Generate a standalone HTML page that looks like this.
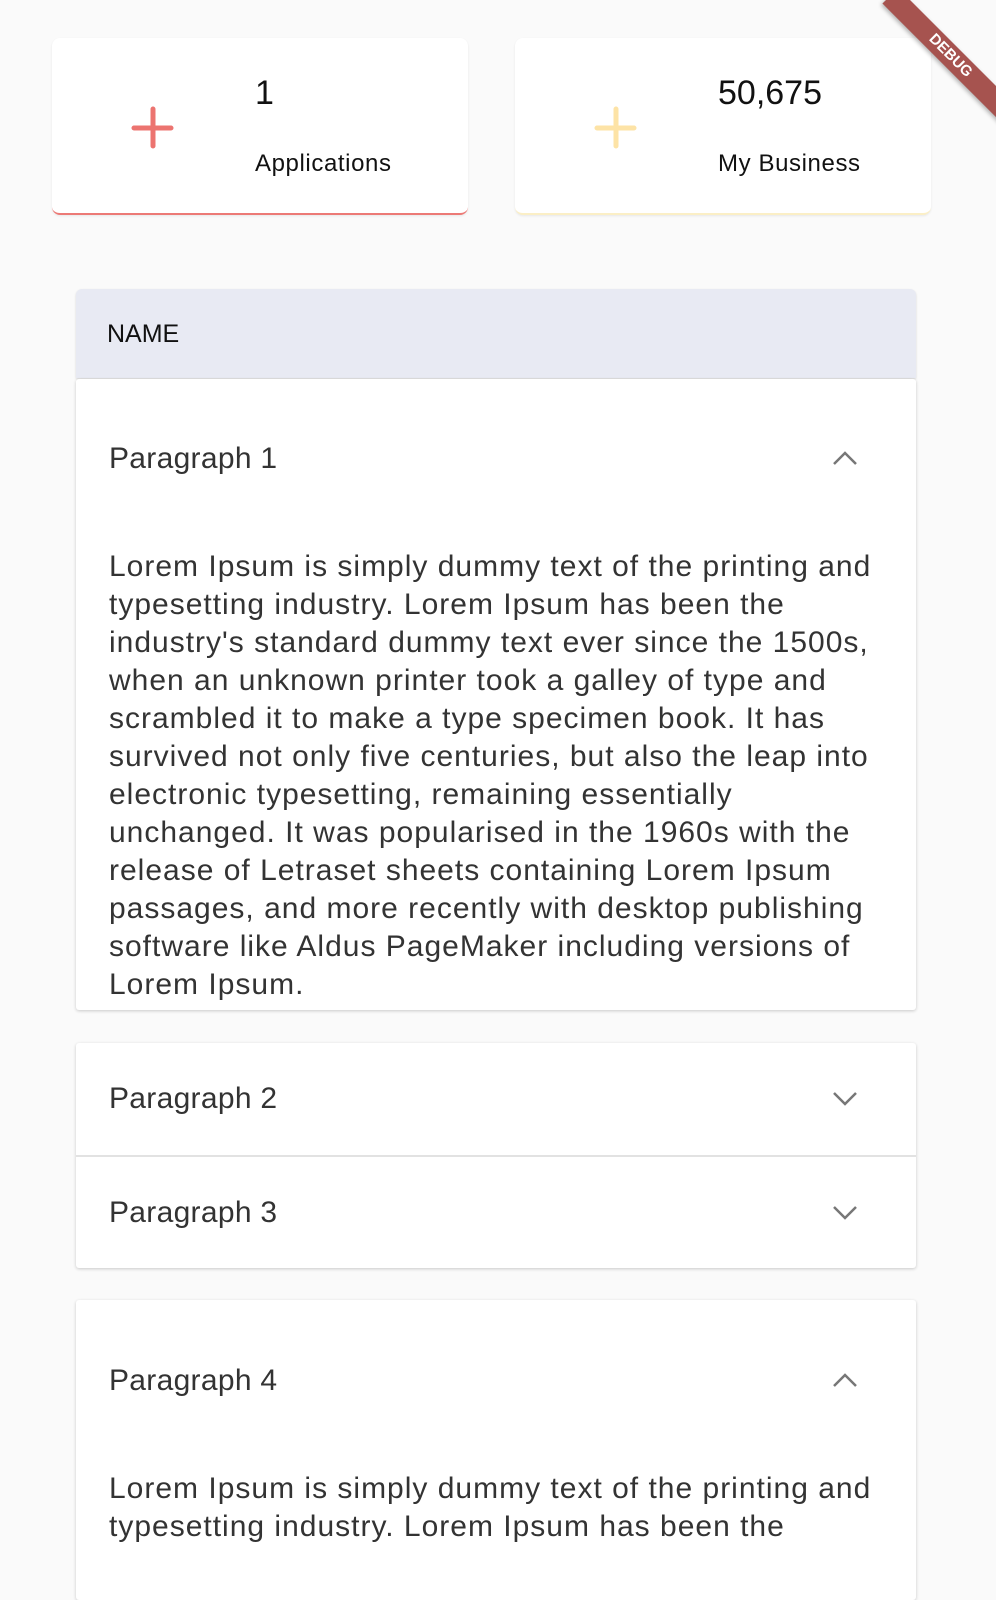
<!DOCTYPE html><html><head><style>
body{margin:0;width:996px;height:1552px;background:#fafafa;position:relative;overflow:hidden;font-family:"Liberation Sans",sans-serif;color:#222}
.card{position:absolute;top:38px;width:416px;height:175px;background:#fff;border-radius:8px;box-shadow:0 1px 2px rgba(0,0,0,.08)}
.num{position:absolute;left:203px;top:36px;font-size:34px;color:#111}
.lab{position:absolute;left:203px;top:112px;font-size:24px;color:#111;letter-spacing:.6px}
.plus{position:absolute;left:78px;top:67px}
.hdr{position:absolute;left:76px;top:289px;width:840px;height:89px;background:#e8eaf3;border-radius:6px 6px 0 0;box-shadow:0 1px 2px rgba(0,0,0,.15)}
.hdr span{position:absolute;left:31px;top:31px;font-size:25px;color:#111}
.p{position:absolute;left:76px;width:840px;background:#fff;box-shadow:0 1px 3px rgba(0,0,0,.2);border-radius:3px}
.t{position:absolute;left:33px;font-size:30px;color:#333;letter-spacing:.3px}
.ch{position:absolute;left:756px}
.body{position:absolute;left:33px;font-size:30px;letter-spacing:1px;line-height:38px;color:#333;white-space:nowrap}
</style></head><body>
<div class="card" style="left:52px;border-bottom:2px solid #ec7a76">
<svg class="plus" width="46" height="46"><path d="M23 4V41M4 23H41" stroke="#ec7470" stroke-width="5" stroke-linecap="round"/></svg>
<div class="num">1</div><div class="lab">Applications</div></div>
<div class="card" style="left:515px;border-bottom:2px solid #fbefc6">
<svg class="plus" width="46" height="46"><path d="M23 4V41M4 23H41" stroke="#fde3a6" stroke-width="5" stroke-linecap="round"/></svg>
<div class="num">50,675</div><div class="lab">My Business</div></div>
<div class="hdr"><span>NAME</span></div>
<div class="p" style="top:379px;height:631px">
<div class="t" style="top:63px">Paragraph 1</div>
<svg class="ch" style="top:70px" width="26" height="18"><path d="M2 15L13 4L24 15" stroke="#777" stroke-width="2.5" fill="none"/></svg>
<div class="body" style="top:169px">Lorem Ipsum is simply dummy text of the printing and<br>typesetting industry. Lorem Ipsum has been the<br>industry's standard dummy text ever since the 1500s,<br>when an unknown printer took a galley of type and<br>scrambled it to make a type specimen book. It has<br>survived not only five centuries, but also the leap into<br>electronic typesetting, remaining essentially<br>unchanged. It was popularised in the 1960s with the<br>release of Letraset sheets containing Lorem Ipsum<br>passages, and more recently with desktop publishing<br>software like Aldus PageMaker including versions of<br>Lorem Ipsum.</div></div>
<div class="p" style="top:1043px;height:225px">
<div class="t" style="top:39px">Paragraph 2</div>
<svg class="ch" style="top:47px" width="26" height="18"><path d="M2 3L13 14L24 3" stroke="#777" stroke-width="2.5" fill="none"/></svg>
<div style="position:absolute;left:0;right:0;top:112px;height:2px;background:#e2e2e2"></div>
<div class="t" style="top:153px">Paragraph 3</div>
<svg class="ch" style="top:161px" width="26" height="18"><path d="M2 3L13 14L24 3" stroke="#777" stroke-width="2.5" fill="none"/></svg>
</div>
<div class="p" style="top:1300px;height:300px">
<div class="t" style="top:64px">Paragraph 4</div>
<svg class="ch" style="top:71px" width="26" height="18"><path d="M2 15L13 4L24 15" stroke="#777" stroke-width="2.5" fill="none"/></svg>
<div class="body" style="top:170px">Lorem Ipsum is simply dummy text of the printing and<br>typesetting industry. Lorem Ipsum has been the</div></div>
<div style="position:absolute;width:170px;height:22px;background:#a6534f;transform:rotate(45deg);transform-origin:0 0;left:898px;top:-12px;color:#fff;font-size:15px;font-weight:bold;text-align:center;line-height:22px;box-shadow:0 2px 4px rgba(0,0,0,.3)">DEBUG</div>
</body></html>
